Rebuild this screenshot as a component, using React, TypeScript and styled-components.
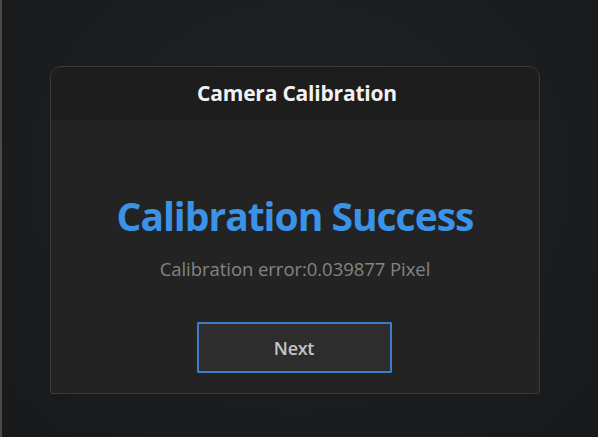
import React from "react";
import styled, { createGlobalStyle } from "styled-components";

const Global = createGlobalStyle`
  html, body { margin: 0; padding: 0; background: #ffffff; }
  body { width: 601px; height: 440px; overflow: hidden; font-family: "Open Sans", "Noto Sans", sans-serif; }
`;

const Frame = styled.div`
  box-sizing: border-box;
  width: 598px;
  height: 437px;
  background: radial-gradient(ellipse at 50% 40%, #222325 0%, #1b1c1e 60%, #18191b 100%);
  border-left: 2px solid #4a4a4a;
  display: flex;
  flex-direction: column;
  align-items: flex-start;
  padding-top: 66px;
  padding-left: 48px;
`;

const Dialog = styled.div`
  box-sizing: border-box;
  width: 490px;
  height: 328px;
  border: 1.5px solid #3a3a3c;
  border-radius: 11px 11px 2px 2px;
  background: #232323;
  display: flex;
  flex-direction: column;
  overflow: hidden;
`;

const Header = styled.div`
  height: 51px;
  flex: none;
  background: #1d1d1e;
  display: flex;
  align-items: center;
  justify-content: center;
  color: #f2f2f2;
  font-weight: 700;
  font-size: 21px;
  letter-spacing: -0.2px;
  padding-bottom: 2px;
  padding-left: 4px;
`;

const Body = styled.div`
  flex: 1;
  display: flex;
  flex-direction: column;
  align-items: center;
  padding-top: 74px;
`;

const Success = styled.div`
  color: #3b93e8;
  font-weight: 700;
  font-size: 39px;
  line-height: 44px;
  letter-spacing: -1px;
`;

const ErrorText = styled.div`
  margin-top: 19px;
  color: #838383;
  font-size: 18.5px;
  line-height: 24px;
  letter-spacing: -0.05px;
`;

const NextButton = styled.button`
  margin-top: 41px;
  box-sizing: border-box;
  width: 195px;
  height: 51px;
  background: #2d2d2e;
  border: 2px solid #3f7cc9;
  border-radius: 1px;
  color: #c4c4c4;
  font-family: "Open Sans", "Noto Sans", sans-serif;
  font-size: 18px;
  font-weight: 600;
  letter-spacing: -0.3px;
  margin-left: -2px;
`;

export default function App() {
  return (
    <>
      <Global />
      <Frame>
        <Dialog>
          <Header>Camera Calibration</Header>
          <Body>
            <Success>Calibration Success</Success>
            <ErrorText>Calibration error:0.039877 Pixel</ErrorText>
            <NextButton>Next</NextButton>
          </Body>
        </Dialog>
      </Frame>
    </>
  );
}
